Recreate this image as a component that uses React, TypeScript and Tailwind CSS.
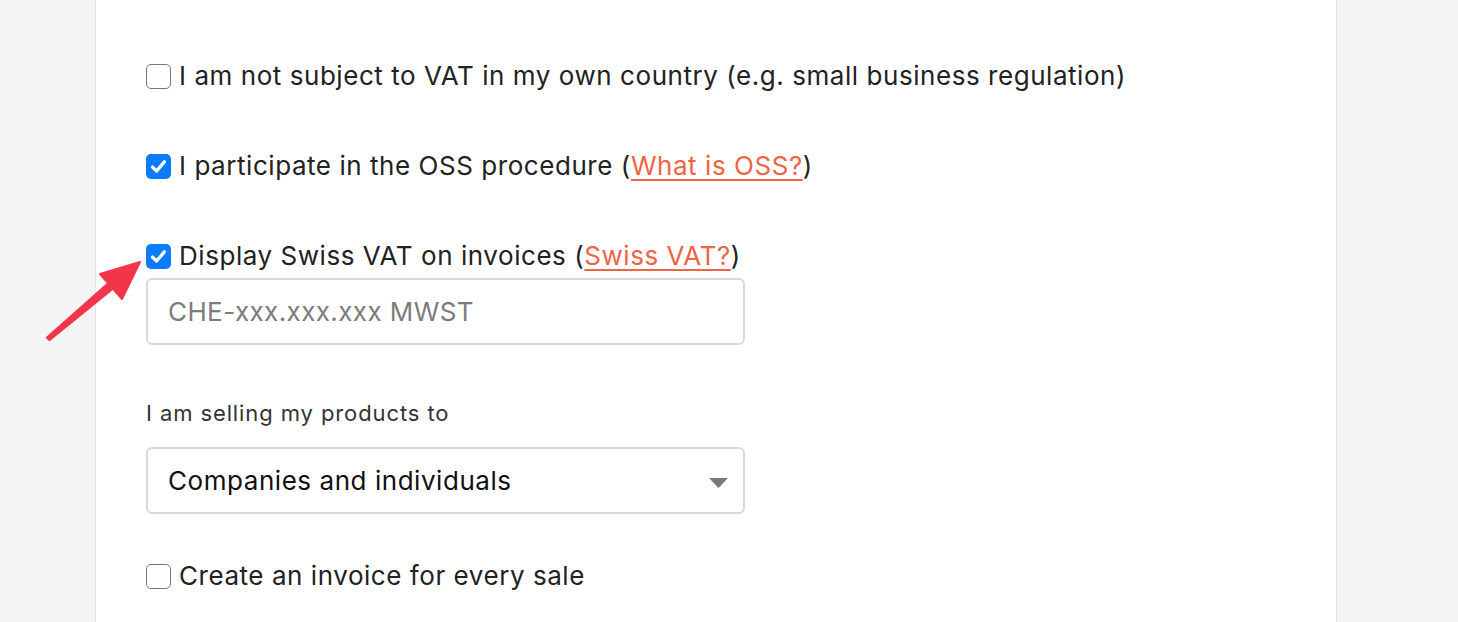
import { useState } from 'react';

const font = { fontFamily: 'Inter, "Noto Sans", sans-serif' };

function Checkbox({ checked, onChange }: { checked: boolean; onChange: () => void }) {
  return (
    <button
      type="button"
      onClick={onChange}
      className={`flex h-[25px] w-[25px] shrink-0 items-center justify-center rounded-[5px] ${
        checked ? 'bg-[#0b7bff]' : 'border-[1.5px] border-[#767676] bg-white'
      }`}
    >
      {checked && (
        <svg viewBox="0 0 20 20" className="h-[21px] w-[21px]">
          <path d="M4.3 10.6 L8.2 14.3 L15.6 5.6" fill="none" stroke="white" strokeWidth="3.2" strokeLinecap="round" strokeLinejoin="round" />
        </svg>
      )}
    </button>
  );
}

function CheckRow({
  checked,
  onChange,
  children,
}: {
  checked: boolean;
  onChange: () => void;
  children: React.ReactNode;
}) {
  return (
    <label className="flex h-8 items-center gap-[8px] text-[26px] leading-8 tracking-[0.55px] text-[#222]">
      <Checkbox checked={checked} onChange={onChange} />
      <span>{children}</span>
    </label>
  );
}

export default function App() {
  const [notVat, setNotVat] = useState(false);
  const [oss, setOss] = useState(true);
  const [swiss, setSwiss] = useState(true);
  const [invoice, setInvoice] = useState(false);

  return (
    <div className="h-[622px] overflow-hidden bg-[#f4f4f4]" style={font}>
      <div className="relative ml-[95px] h-full w-[1242px] border-x border-[#e6e6e6] bg-white pl-[50px] pt-[60px]">
        {/* arrow pointing at the Swiss VAT checkbox */}
        <svg className="absolute left-[-96px] top-[240px]" width="150" height="110" viewBox="0 0 150 110">
          <path d="M46.5 97.5 L108 43 L113 49 L49.5 100.5 Z" fill="#f2364a" stroke="#f2364a" strokeWidth="1.5" strokeLinejoin="round" />
          <path d="M140 22 L100 34 L122 59 Z" fill="#f2364a" stroke="#f2364a" strokeWidth="2" strokeLinejoin="round" />
        </svg>

        <div className="flex flex-col">
          <CheckRow checked={notVat} onChange={() => setNotVat(!notVat)}>
            I am not subject to VAT in my own country (e.g. small business regulation)
          </CheckRow>

          <div className="mt-[58px]">
            <CheckRow checked={oss} onChange={() => setOss(!oss)}>
              I participate in the OSS procedure (
              <a href="#" className="text-[#ef6443] underline decoration-[1.5px] underline-offset-[4px]">
                What is OSS?
              </a>
              )
            </CheckRow>
          </div>

          <div className="mt-[58px]">
            <CheckRow checked={swiss} onChange={() => setSwiss(!swiss)}>
              Display Swiss VAT on invoices (
              <a href="#" className="text-[#ef6443] underline decoration-[1.5px] underline-offset-[4px]">
                Swiss VAT?
              </a>
              )
            </CheckRow>
          </div>

          <input
            placeholder="CHE-xxx.xxx.xxx MWST"
            className="mt-[6px] h-[67px] w-[599px] rounded-[6px] border-2 border-[#dadada] px-[20px] text-[26px] tracking-[0.4px] text-[#222] outline-none placeholder:text-[#7c7c7c]"
          />

          <div className="mt-[54px] text-[22px] leading-7 tracking-[0.9px] text-[#333]">I am selling my products to</div>

          <div className="relative mt-[20px] w-[599px]">
            <select className="h-[67px] w-full appearance-none rounded-[6px] border-2 border-[#dadada] bg-white px-[20px] text-[26px] tracking-[0.55px] text-[#111] outline-none">
              <option>Companies and individuals</option>
              <option>Companies only</option>
              <option>Individuals only</option>
            </select>
            <svg className="pointer-events-none absolute right-[17px] top-[31px]" width="19" height="10" viewBox="0 0 19 10">
              <path d="M0 0 H19 L9.5 10 Z" fill="#7a7a7a" />
            </svg>
          </div>

          <div className="mt-[46px]">
            <CheckRow checked={invoice} onChange={() => setInvoice(!invoice)}>
              Create an invoice for every sale
            </CheckRow>
          </div>
        </div>
      </div>
    </div>
  );
}
